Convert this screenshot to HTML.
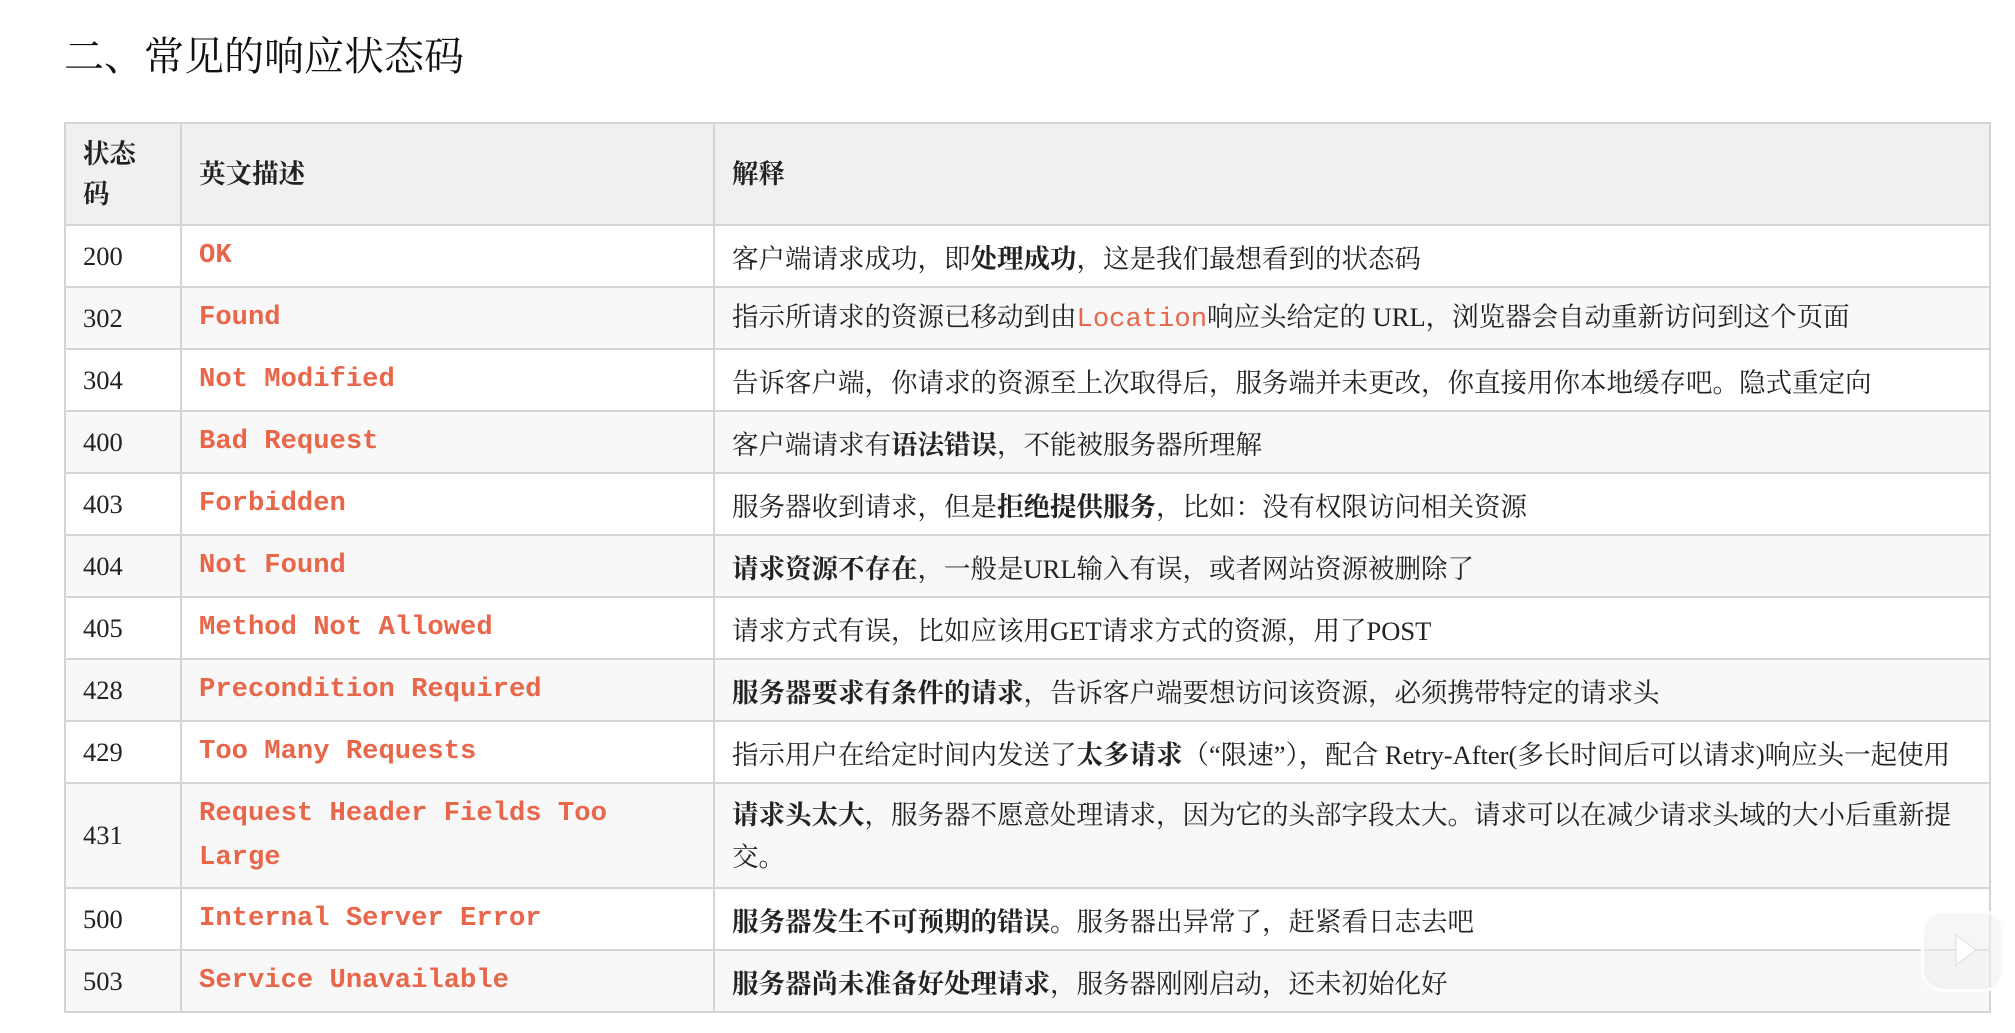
<!DOCTYPE html>
<html><head><meta charset="utf-8"><style>
body{margin:0;width:2015px;height:1033px;background:#fff;overflow:hidden;position:relative;font-family:"Liberation Serif","Noto Serif CJK SC",serif;color:#222}
h2{position:absolute;left:64px;top:30px;margin:0;font-size:40px;font-weight:normal;line-height:54px;font-family:"Liberation Serif","Noto Serif CJK SC",serif;color:#111}
table{position:absolute;left:64px;top:122px;border-collapse:collapse;width:1927px;font-size:26.5px}
td,th{border:2px solid #d4d4d4;padding:0 0 0 17px;text-align:left;vertical-align:middle}
th{background:#f0f0f0;font-weight:bold;height:100px;line-height:40px}
tr:nth-child(odd) td{background:#f8f8f8}
tr:nth-child(even) td{background:#fff}
td{height:60px}
code{font-family:"Liberation Mono",monospace;font-weight:bold;color:#e8664a;font-size:27.2px;line-height:44px}
b{font-weight:bold}
.c1{width:97px}.c2{width:514px}
.bili{position:absolute;left:1921px;top:910px;width:84px;height:82px;border:3px solid rgba(255,255,255,.9);border-radius:22px;background:rgba(240,240,240,.6);box-sizing:border-box}
</style></head><body>
<h2>二、常见的响应状态码</h2>
<table>
<tr><th class="c1">状态<br>码</th><th class="c2">英文描述</th><th>解释</th></tr>
<tr><td>200</td><td><code>OK</code></td><td>客户端请求成功，即<b>处理成功</b>，这是我们最想看到的状态码</td></tr>
<tr><td>302</td><td><code>Found</code></td><td>指示所请求的资源已移动到由<code style="font-weight:normal">Location</code>响应头给定的 URL，浏览器会自动重新访问到这个页面</td></tr>
<tr><td>304</td><td><code>Not Modified</code></td><td>告诉客户端，你请求的资源至上次取得后，服务端并未更改，你直接用你本地缓存吧。隐式重定向</td></tr>
<tr><td>400</td><td><code>Bad Request</code></td><td>客户端请求有<b>语法错误</b>，不能被服务器所理解</td></tr>
<tr><td>403</td><td><code>Forbidden</code></td><td>服务器收到请求，但是<b>拒绝提供服务</b>，比如：没有权限访问相关资源</td></tr>
<tr><td>404</td><td><code>Not Found</code></td><td><b>请求资源不存在</b>，一般是URL输入有误，或者网站资源被删除了</td></tr>
<tr><td>405</td><td><code>Method Not Allowed</code></td><td>请求方式有误，比如应该用GET请求方式的资源，用了POST</td></tr>
<tr><td>428</td><td><code>Precondition Required</code></td><td><b>服务器要求有条件的请求</b>，告诉客户端要想访问该资源，必须携带特定的请求头</td></tr>
<tr><td>429</td><td><code>Too Many Requests</code></td><td>指示用户在给定时间内发送了<b>太多请求</b>（“限速”），配合 Retry-After(多长时间后可以请求)响应头一起使用</td></tr>
<tr><td style="height:103px">431</td><td><code>Request Header Fields Too<br>Large</code></td><td style="line-height:42px"><b>请求头太大</b>，服务器不愿意处理请求，因为它的头部字段太大。请求可以在减少请求头域的大小后重新提<br>交。</td></tr>
<tr><td>500</td><td><code>Internal Server Error</code></td><td><b>服务器发生不可预期的错误</b>。服务器出异常了，赶紧看日志去吧</td></tr>
<tr><td>503</td><td><code>Service Unavailable</code></td><td><b>服务器尚未准备好处理请求</b>，服务器刚刚启动，还未初始化好</td></tr>
</table>
<div class="bili"><svg width="78" height="76" style="position:absolute;left:0;top:0"><path d="M32 22 L52 37 L32 52 Z" fill="rgba(255,255,255,.95)" stroke="#ddd" stroke-width="1"/></svg></div>
</body></html>
